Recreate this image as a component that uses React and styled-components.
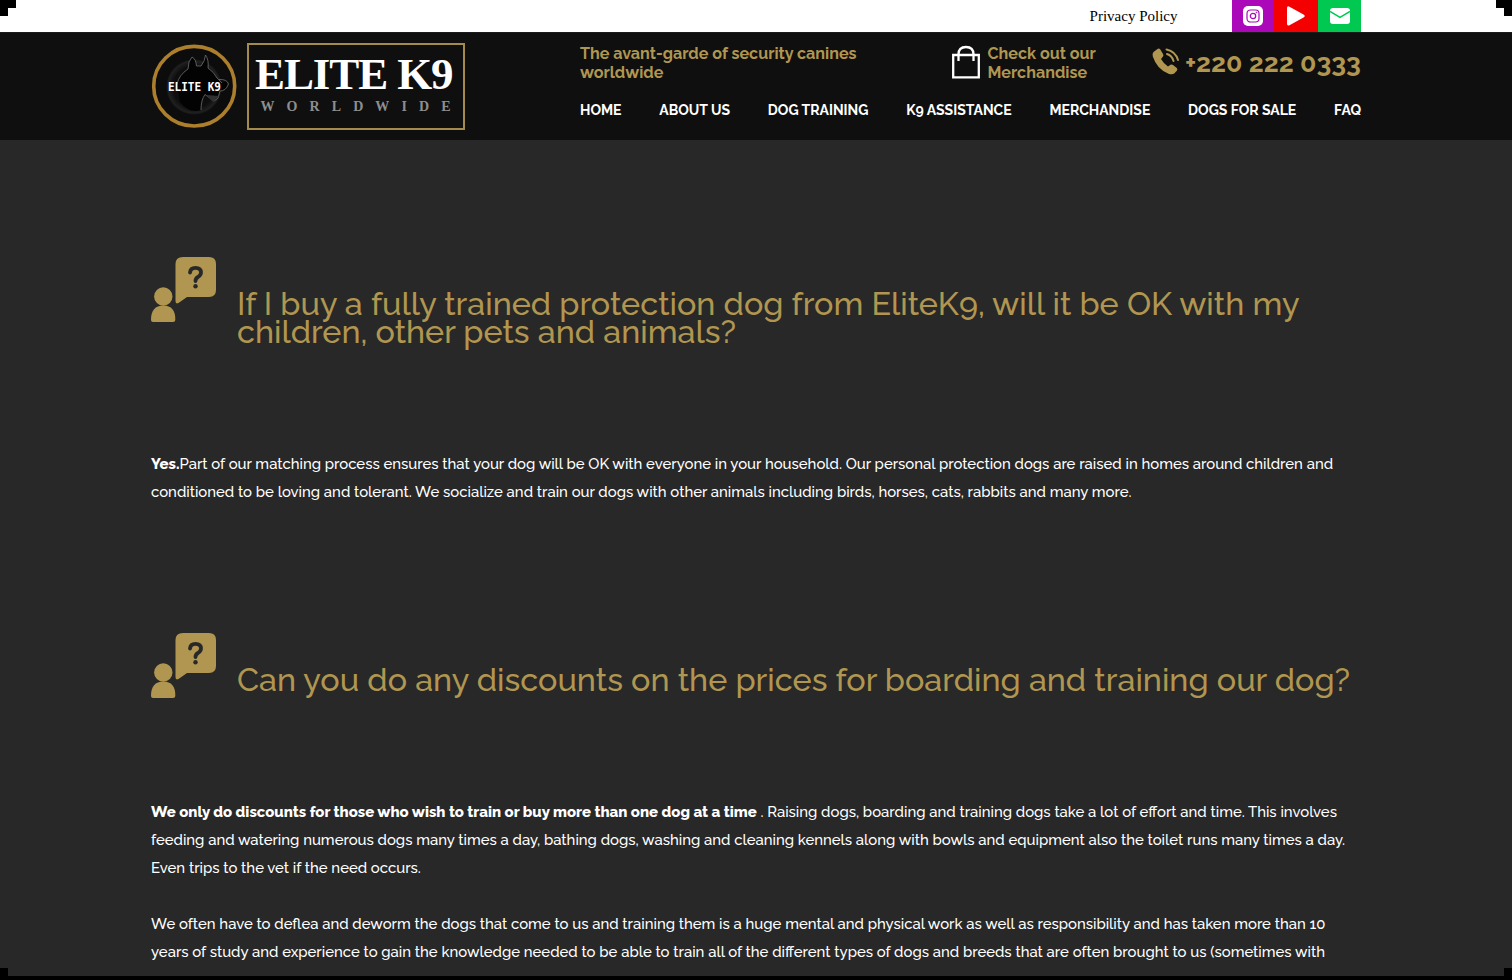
import React from 'react';
import styled, { createGlobalStyle, css } from 'styled-components';

const gold = '#b09650';
const sans = "Raleway, Lato, 'Open Sans', sans-serif";
const serif = "'Liberation Serif', 'Times New Roman', serif";

const GlobalStyle = createGlobalStyle`
  * { box-sizing: border-box; }
  body { margin: 0; background: #282828; }
`;

const Page = styled.div`
  position: relative;
  height: 980px;
  overflow: hidden;
  background: #282828;
  color: #fff;
  font-family: ${sans};
  font-feature-settings: 'ss09';
`;

const Container = styled.div`
  width: 1210px;
  margin: 0 auto;
  display: flex;
`;

const TopBar = styled.div`
  height: 32px;
  background: #fff;
`;

const TopBarInner = styled(Container)`
  height: 32px;
  justify-content: flex-end;
  align-items: center;
`;

const PolicyLink = styled.a`
  margin-right: 54.5px;
  color: #000;
  font: 15px/32px ${serif};
`;

const SocialLink = styled.a`
  width: ${({ $w }) => $w}px;
  height: 32px;
  display: flex;
  align-items: center;
  justify-content: center;
  background: ${({ $color }) => $color};
`;

const Header = styled.header`
  height: 108px;
  background: #0f0f0f;
  border-top: 1px solid #1b1b1b;
`;

const HeaderInner = styled(Container)`
  align-items: flex-start;
`;

const Medallion = styled.svg`
  width: 88px;
  height: 88px;
  margin-top: 9px;
  flex: none;
`;

const Wordmark = styled.div`
  width: 218px;
  height: 87px;
  margin: 10px 0 0 8.4px;
  border: 2px solid #a38a4d;
  display: flex;
  flex-direction: column;
  flex: none;
  white-space: nowrap;
`;

const BrandName = styled.span`
  padding: 7px 0 0 5.6px;
  font: 700 45px/44px ${serif};
  letter-spacing: -1.1px;
`;

const BrandSub = styled.span`
  padding: 3px 0 0 11px;
  color: #8e8e8e;
  font: 700 14px/16px ${serif};
  letter-spacing: 12.1px;
`;

const HeaderContent = styled.div`
  width: 781px;
  margin-left: auto;
  padding-top: 11px;
`;

const HeaderRow = styled.div`
  height: 38px;
  display: flex;
  align-items: flex-start;
`;

const TextLine = styled.span`
  display: block;
  white-space: nowrap;
`;

const Tagline = styled.div`
  width: ${({ $w }) => $w}px;
  flex: none;
  color: ${gold};
  font-size: 16.14px;
  font-weight: 700;
  line-height: 19px;
`;

const BagIcon = styled.svg`
  width: 28px;
  height: 34px;
  flex: none;
  margin: 1px 8px 0 0;
`;

const PhoneIcon = styled.svg`
  width: 28px;
  height: 28px;
  margin: 4px 5px 0 0;
`;

const Phone = styled.a`
  display: flex;
  color: ${gold};
  font-size: 26.6px;
  font-weight: 700;
  line-height: 38px;
  white-space: nowrap;
`;

const Nav = styled.nav`
  display: flex;
  justify-content: space-between;
  margin-top: 18px;
`;

const NavLink = styled.a`
  font-size: 14px;
  font-weight: 700;
  line-height: 20px;
  white-space: nowrap;
`;

const Question = styled(Container)`
  height: 100px;
  margin-top: ${({ $top }) => $top}px;
`;

const QuestionIcon = styled.svg`
  width: 66px;
  height: 66px;
  flex: none;
  margin-right: 20px;
`;

const QuestionTitle = styled.h2`
  margin: 32.6px 0 0;
  color: ${gold};
  font-size: 32.34px;
  font-weight: 500;
  line-height: 28px;
`;

const Answer = styled(Container)`
  flex-direction: column;
  margin-top: ${({ $top }) => $top}px;
  font-size: 14.9px;
  font-weight: 500;
  line-height: 28px;
`;

const Strong = styled.strong`
  font-size: 14.92px;
  font-weight: 800;
`;

const Corner = styled.i`
  position: absolute;
  background: #000;
  width: ${({ $w }) => $w}px;
  height: ${({ $h }) => $h}px;
  ${({ $right }) => ($right ? css`right: 0;` : css`left: 0;`)}
  ${({ $bottom }) => ($bottom ? css`bottom: 0;` : css`top: 0;`)}
`;

function AskIcon() {
  return (
    <QuestionIcon viewBox="0 0 66 66" fill={gold}>
      <path d="M32 0H58Q65 0 65 7V33Q65 40 58 40H36L27.500 46Q24.500 47.500 24.500 44V7Q24.500 0 32 0Z" />
      <circle cx="12.300" cy="39.500" r="9.200" />
      <path d="M0 63Q0 48.500 12.300 48.500T24.300 63Q24.300 65 22 65H2Q0 65 0 63Z" />
      <path d="M39 15.500Q39.500 10.800 44.500 10.800Q50 10.800 50 15.500Q50 18 47 20Q44.500 21.500 44.500 24" fill="none" stroke="#282828" strokeWidth="3.800" strokeLinecap="round" />
      <circle cx="44.500" cy="29.300" r="2.200" fill="#282828" />
    </QuestionIcon>
  );
}

function Logo() {
  return (
    <>
      <Medallion viewBox="0 0 88 88">
        <defs>
          <radialGradient id="disc" cx="50%" cy="50%" r="50%">
            <stop offset="0" stopColor="#080808" />
            <stop offset=".75" stopColor="#0e0e0e" />
            <stop offset=".93" stopColor="#202020" />
            <stop offset="1" stopColor="#0c0c0c" />
          </radialGradient>
        </defs>
        <ellipse cx="43.200" cy="44.200" rx="40.500" ry="39.800" fill="#0c0c0c" stroke="#ac7f2d" strokeWidth="3.600" />
        <circle cx="43" cy="45" r="28" fill="url(#disc)" />
        <path d="M26 42Q28 33 37 27Q37 19 41 15Q45 17 45.500 24L50 24Q54 19 54.500 13Q58 18 57 26Q63 30 66 36L71 41Q76 38 77 43Q75 49 69 49L67 56Q61 52 54 53Q50 58 50 68Q38 72 29 60Z" fill="#030303" />
        <path d="M26 42Q28 33 37 27Q37 19 41 15Q45 17 45.500 24L50 24Q54 19 54.500 13Q58 18 57 26Q63 30 66 36L71 41M68 37.500Q76 37 77.500 42Q75 49 69 49L67 56L63 59L54 52.500Q50 58 50 68" fill="none" stroke="#707070" strokeWidth=".8" />
        <path d="M55 53L68 54L62 60Z" fill="#303030" />
        <text x="17" y="49" textLength="53" lengthAdjust="spacingAndGlyphs" fill="#fff" fontFamily="'DejaVu Sans Mono', monospace" fontWeight="700" fontSize="13">ELITE K9</text>
      </Medallion>
      <Wordmark>
        <BrandName>ELITE K9</BrandName>
        <BrandSub>WORLDWIDE</BrandSub>
      </Wordmark>
    </>
  );
}

export default function App() {
  return (
    <Page>
      <GlobalStyle />
      <TopBar>
        <TopBarInner>
          <PolicyLink>Privacy Policy</PolicyLink>
          <SocialLink $color="#aa08b8" $w={42}>
            <svg width="20" height="20" viewBox="0 0 20 20" fill="none" stroke="#aa08b8">
              <rect width="20" height="20" rx="5" fill="#fff" stroke="none" />
              <rect x="4" y="4" width="12" height="12" rx="3.500" strokeWidth="1.200" />
              <circle cx="10" cy="10" r="2.700" strokeWidth="1.200" />
              <circle cx="13.500" cy="6.500" r=".4" />
            </svg>
          </SocialLink>
          <SocialLink $color="#f40000" $w={44}>
            <svg width="20" height="20" viewBox="0 0 20 20" fill="#fff">
              <path d="M1 2.200Q1 -.6 3.500 .8L17.500 8.500Q20 10 17.500 11.500L3.500 19.200Q1 20.500 1 17.800Z" />
            </svg>
          </SocialLink>
          <SocialLink $color="#00c850" $w={43}>
            <svg width="20" height="16" viewBox="0 0 20 16">
              <rect width="20" height="16" rx="3" fill="#fff" />
              <path d="M0 3.500L10 9.500L20 3.500" fill="none" stroke="#00c850" strokeWidth="1.500" />
            </svg>
          </SocialLink>
        </TopBarInner>
      </TopBar>

      <Header>
        <HeaderInner>
          <Logo />
          <HeaderContent>
            <HeaderRow>
              <Tagline $w={371.5}>
                <TextLine>The avant-garde of security canines</TextLine>
                <TextLine>worldwide</TextLine>
              </Tagline>
              <BagIcon viewBox="0 0 28 34" fill="none" stroke="#fff" strokeWidth="2.300">
                <path d="M1.200 10H26.800V32.300H1.200Z" />
                <path d="M6.500 16V9.500Q6.500 2 14 2T21.500 9.500V16" />
              </BagIcon>
              <Tagline $w={164.5}>
                <TextLine>Check out our</TextLine>
                <TextLine>Merchandise</TextLine>
              </Tagline>
              <Phone>
                <PhoneIcon viewBox="0 0 28 28" fill={gold}>
                  <path d="M1.500 4L5.500 1Q7 0 8.300 1.500L11 6Q12 7.500 10.800 8.800L9 11Q11.500 15.500 16 18.500L18.500 16.800Q19.800 16 21 17L24.500 19.800Q26 21 25 22.500L22.500 25.300Q20.500 27 17 26Q5 21.500 .8 8.500Q0 5.500 1.500 4Z" />
                  <path d="M15 6Q20 7.500 21.500 13M14.500 1.500Q23.500 3.500 26 12" fill="none" stroke={gold} strokeWidth="2" strokeLinecap="round" />
                </PhoneIcon>
                +220 222 0333
              </Phone>
            </HeaderRow>
            <Nav>
              <NavLink>HOME</NavLink>
              <NavLink>ABOUT US</NavLink>
              <NavLink>DOG TRAINING</NavLink>
              <NavLink>K9 ASSISTANCE</NavLink>
              <NavLink>MERCHANDISE</NavLink>
              <NavLink>DOGS FOR SALE</NavLink>
              <NavLink>FAQ</NavLink>
            </Nav>
          </HeaderContent>
        </HeaderInner>
      </Header>

      <Question $top={117}>
        <AskIcon />
        <QuestionTitle>
          <TextLine>If I buy a fully trained protection dog from EliteK9, will it be OK with my</TextLine>
          <TextLine>children, other pets and animals?</TextLine>
        </QuestionTitle>
      </Question>
      <Answer $top={93}>
        <TextLine><Strong>Yes.</Strong>Part of our matching process ensures that your dog will be OK with everyone in your household. Our personal protection dogs are raised in homes around children and</TextLine>
        <TextLine>conditioned to be loving and tolerant. We socialize and train our dogs with other animals including birds, horses, cats, rabbits and many more.</TextLine>
      </Answer>

      <Question $top={127}>
        <AskIcon />
        <QuestionTitle>
          <TextLine>Can you do any discounts on the prices for boarding and training our dog?</TextLine>
        </QuestionTitle>
      </Question>
      <Answer $top={65}>
        <TextLine><Strong>We only do discounts for those who wish to train or buy more than one dog at a time</Strong> . Raising dogs, boarding and training dogs take a lot of effort and time. This involves</TextLine>
        <TextLine>feeding and watering numerous dogs many times a day, bathing dogs, washing and cleaning kennels along with bowls and equipment also the toilet runs many times a day.</TextLine>
        <TextLine>Even trips to the vet if the need occurs.</TextLine>
      </Answer>
      <Answer $top={28.4}>
        <TextLine>We often have to deflea and deworm the dogs that come to us and training them is a huge mental and physical work as well as responsibility and has taken more than 10</TextLine>
        <TextLine>years of study and experience to gain the knowledge needed to be able to train all of the different types of dogs and breeds that are often brought to us (sometimes with</TextLine>
      </Answer>

      <Corner $w={16} $h={8} />
      <Corner $w={8} $h={16} />
      <Corner $w={16} $h={8} $right />
      <Corner $w={8} $h={16} $right />
      <Corner $w={8} $h={12} $bottom />
      <Corner $w={8} $h={12} $bottom $right />
      <Corner $w={1512} $h={4} $bottom />
    </Page>
  );
}
